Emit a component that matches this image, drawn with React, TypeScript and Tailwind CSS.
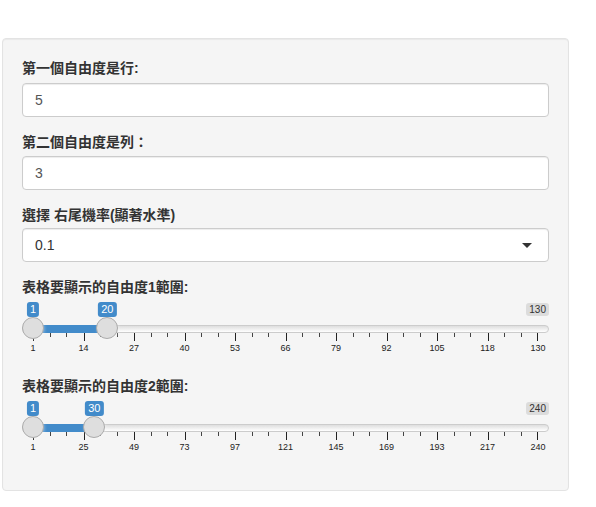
import React from 'react';

const font = "font-['Liberation_Sans','Noto_Sans_CJK_TC',sans-serif]";

interface RangeProps {
  min: number;
  max: number;
  from: number;
  to: number;
  grid: number[];
}

const WIDTH = 527;
const HANDLE = 22;
const SPAN = WIDTH - HANDLE;

// centre of a handle for value v, in px from the left of the slider
const pos = (v: number, min: number, max: number) => HANDLE / 2 + ((v - min) / (max - min)) * SPAN;

const RangeSlider: React.FC<RangeProps> = ({ min, max, from, to, grid }) => {
  const x1 = pos(from, min, max);
  const x2 = pos(to, min, max);
  return (
    <div className="relative h-[55px] w-full pt-[23px]">
      <span className="absolute right-0 top-[1px] rounded-[3px] bg-black/10 px-[3px] py-[1px] text-[10px] leading-[11px] text-[#333]">
        {max}
      </span>

      <div className="h-[8px] w-full rounded-[8px] border border-[#cccccc] bg-linear-to-b from-[#dedede] to-white" />

      {/* ticks */}
      <div className="flex px-[11px]">
        {grid.slice(0, -1).map((g) => (
          <div key={g} className="flex flex-1 justify-between">
            <span className="h-[8px] w-px bg-[#222]" />
            <span className="h-[4px] w-px bg-[#444]" />
            <span className="h-[4px] w-px bg-[#444]" />
            <span className="w-px" />
          </div>
        ))}
        <span className="-ml-px h-[8px] w-px bg-[#222]" />
      </div>

      {/* tick labels */}
      <div className="mt-[2px] flex justify-between px-[11px]">
        {grid.map((g) => (
          <div key={g} className="flex w-0 justify-center">
            <span className="whitespace-nowrap text-[9px] leading-[11px] text-[#222]">{g}</span>
          </div>
        ))}
      </div>

      <div className="absolute top-[23px] h-[8px] bg-[#428bca]" style={{ left: x1, width: x2 - x1 }} />

      {[x1, x2].map((x, i) => (
        <div
          key={i}
          className="absolute top-[15px] h-[22px] w-[22px] rounded-full border border-[#ababab] bg-[#dedede] shadow-[1px_1px_3px_rgba(255,255,255,0.3)]"
          style={{ left: x - HANDLE / 2 }}
        />
      ))}

      {[
        [x1, from],
        [x2, to],
      ].map(([x, v], i) => (
        <span
          key={i}
          className="absolute top-0 -translate-x-1/2 rounded-[3px] bg-[#428bca] px-[3px] py-[1px] text-[11px] leading-[13px] text-white"
          style={{ left: x }}
        >
          {v}
        </span>
      ))}
    </div>
  );
};

const Label: React.FC<{ children: React.ReactNode; className?: string }> = ({ children, className = '' }) => (
  <label className={`block text-[14px] font-bold leading-[20px] text-[#333] ${className}`}>{children}</label>
);

const TextInput: React.FC<{ value: string }> = ({ value }) => (
  <div className="h-[34px] w-full rounded-[4px] border border-[#cccccc] bg-white px-[12px] py-[6px] text-[14px] leading-[20px] text-[#555] shadow-[inset_0_1px_1px_rgba(0,0,0,0.075)]">
    {value}
  </div>
);

export default function App() {
  return (
    <div className={`min-h-[507px] w-[596px] bg-white pl-[2px] pt-[38px] ${font}`}>
      <div className="flex w-[567px] flex-col rounded-[4px] border border-[#e3e3e3] bg-[#f5f5f5] p-[19px] shadow-[inset_0_1px_1px_rgba(0,0,0,0.05)]">
        <div className="mb-[15px]">
          <Label className="mb-[5px]">第一個自由度是行:</Label>
          <TextInput value="5" />
        </div>
        <div className="mb-[15px]">
          <Label className="mb-[4px]">第二個自由度是列：</Label>
          <TextInput value="3" />
        </div>
        <div className="mb-[15px]">
          <Label className="mb-[3px]">選擇 右尾機率(顯著水準)</Label>
          <div className="flex h-[34px] w-full items-center justify-between rounded-[4px] border border-[#cccccc] bg-white pl-[12px] pr-[16px] text-[14px] text-[#333] shadow-[inset_0_1px_1px_rgba(0,0,0,0.075)]">
            <span>0.1</span>
            <span className="h-0 w-0 border-x-[5px] border-t-[5px] border-x-transparent border-t-[#333]" />
          </div>
        </div>
        <div className="mb-[19px]">
          <Label className="mb-[5px]">表格要顯示的自由度1範圍:</Label>
          <RangeSlider min={1} max={130} from={1} to={20} grid={[1, 14, 27, 40, 53, 66, 79, 92, 105, 118, 130]} />
        </div>
        <div className="mb-[15px]">
          <Label className="mb-[5px]">表格要顯示的自由度2範圍:</Label>
          <RangeSlider min={1} max={240} from={1} to={30} grid={[1, 25, 49, 73, 97, 121, 145, 169, 193, 217, 240]} />
        </div>
      </div>
    </div>
  );
}
